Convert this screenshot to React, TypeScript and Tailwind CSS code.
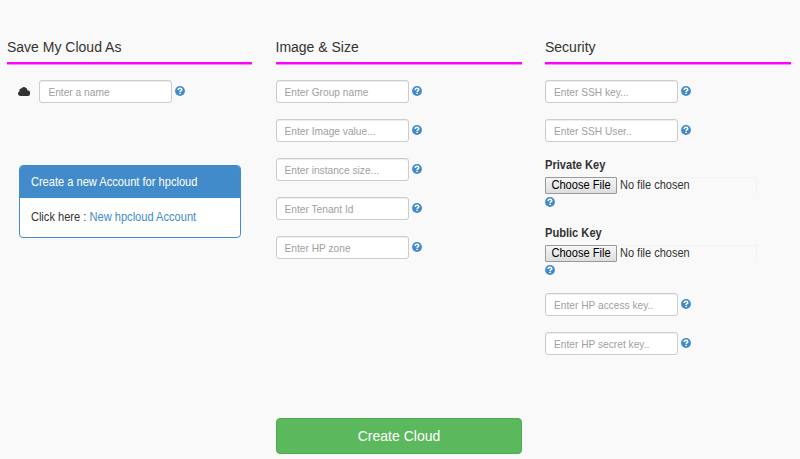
import React from 'react';

function HelpIcon({ className = '' }: { className?: string }) {
  return (
    <svg className={`h-[10px] w-[10px] shrink-0 ${className}`} viewBox="0 0 20 20" aria-label="Help">
      <circle cx="10" cy="10" r="9.9" fill="#428bca" />
      <path d="M6.4 7.9C6.4 5.5 8 4.4 10.1 4.4C12.3 4.4 13.6 5.6 13.6 7.3C13.6 9.4 10.3 9.2 10.3 12" fill="none" stroke="#fff" strokeWidth="3" />
      <path d="M8.6 13.3h3.2v2.9H8.6z" fill="#fff" />
    </svg>
  );
}

function CloudIcon() {
  return (
    <svg className="-mt-px h-[9px] w-3 shrink-0" viewBox="0 0 24 18" aria-hidden="true">
      <path d="M5 17.8a4.9 4.9 0 0 1-1.8-9.5A3.8 3.8 0 0 1 6.4 3.2A6.8 6.8 0 0 1 18.8 6.6A5.6 5.6 0 0 1 18.8 17.8z" fill="#333" />
    </svg>
  );
}

function Field({ placeholder }: { placeholder: string }) {
  return (
    <div className="flex h-[23px] items-center">
      <input
        type="text"
        placeholder={placeholder}
        className="h-[23px] w-[133px] rounded-[3px] border border-[#ccc] bg-white px-2 pt-px text-[10.2px] text-[#555] shadow-[inset_0_1px_1px_rgba(0,0,0,0.075)] outline-none placeholder:text-[#a0a0a0]"
      />
      <HelpIcon className="-mt-px ml-[3px]" />
    </div>
  );
}

function FileField({ label }: { label: string }) {
  return (
    <div className="flex flex-col">
      <div className="-mt-px h-5 text-[11.1px] leading-4 font-bold">
        <span className="inline-block scale-y-[1.08]">{label}</span>
      </div>
      <div className="flex h-[17px] w-[212px] items-center border-t border-r border-[#f2f2f2]">
        <button className="-mt-px h-[17px] w-[72px] shrink-0 rounded-[1px] border border-[#999] bg-linear-to-b from-[#f6f6f6] to-[#dedede] text-[11.1px] leading-[15px] whitespace-nowrap text-black">
          <span className="inline-block scale-y-[1.08]">Choose File</span>
        </button>
        <span className="-mt-0.5 ml-[3px] scale-y-[1.08] text-[11px] leading-4">No file chosen</span>
      </div>
      <HelpIcon className="mt-[3px]" />
    </div>
  );
}

function Heading({ children }: { children: React.ReactNode }) {
  return (
    <div className="flex h-[27px] flex-col">
      <h3 className="h-6 text-[14px] leading-[18px] font-normal">
        <span className="inline-block scale-y-[1.06]">{children}</span>
      </h3>
      <div className="h-0.5 bg-[#ff00ff]" />
      <div className="h-px bg-[#fc86fc]" />
    </div>
  );
}

export default function App() {
  return (
    <main className="h-[459px] w-[800px] overflow-hidden bg-[#f9f9f9] pt-[38px] pl-[7px] font-['Liberation_Sans',Arial,sans-serif] text-[#333]">
      <div className="grid h-[380px] grid-cols-[245px_246px_246px] gap-x-[23.5px]">
        <section>
          <Heading>Save My Cloud As</Heading>
          <div className="mt-[15px] flex items-center pl-[11.4px]">
            <CloudIcon />
            <div className="ml-[9px]">
              <Field placeholder="Enter a name" />
            </div>
          </div>
          <div className="mt-[62px] ml-[11.5px] h-[73px] w-[222.5px] overflow-hidden rounded-[4px] border border-[#428bca] bg-white text-[11.1px]">
            <div className="h-8 bg-[#428bca] pl-[11.4px] leading-8 text-white">
              <span className="inline-block scale-y-[1.08]">Create a new Account for hpcloud</span>
            </div>
            <div className="pl-[11.4px] leading-[39px]">
              <span className="inline-block scale-y-[1.08]">
                Click here : <a className="text-[#428bca]">New hpcloud Account</a>
              </span>
            </div>
          </div>
        </section>
        <section>
          <Heading>Image &amp; Size</Heading>
          <div className="mt-[15px] flex flex-col gap-4">
            <Field placeholder="Enter Group name" />
            <Field placeholder="Enter Image value..." />
            <Field placeholder="Enter instance size..." />
            <Field placeholder="Enter Tenant Id" />
            <Field placeholder="Enter HP zone" />
          </div>
        </section>
        <section>
          <Heading>Security</Heading>
          <div className="mt-[15px] flex flex-col gap-4">
            <Field placeholder="Enter SSH key..." />
            <Field placeholder="Enter SSH User.." />
          </div>
          <div className="mt-4 flex flex-col gap-[19px]">
            <FileField label="Private Key" />
            <FileField label="Public Key" />
          </div>
          <div className="mt-[18px] flex flex-col gap-4">
            <Field placeholder="Enter HP access key.." />
            <Field placeholder="Enter HP secret key.." />
          </div>
        </section>
      </div>
      <button className="ml-[269px] h-[36px] w-[246px] rounded-[4px] border border-[#4cae4c] bg-[#5cb85c] text-[14px] leading-[34px] text-white">
        <span className="inline-block scale-y-[1.06]">Create Cloud</span>
      </button>
    </main>
  );
}
